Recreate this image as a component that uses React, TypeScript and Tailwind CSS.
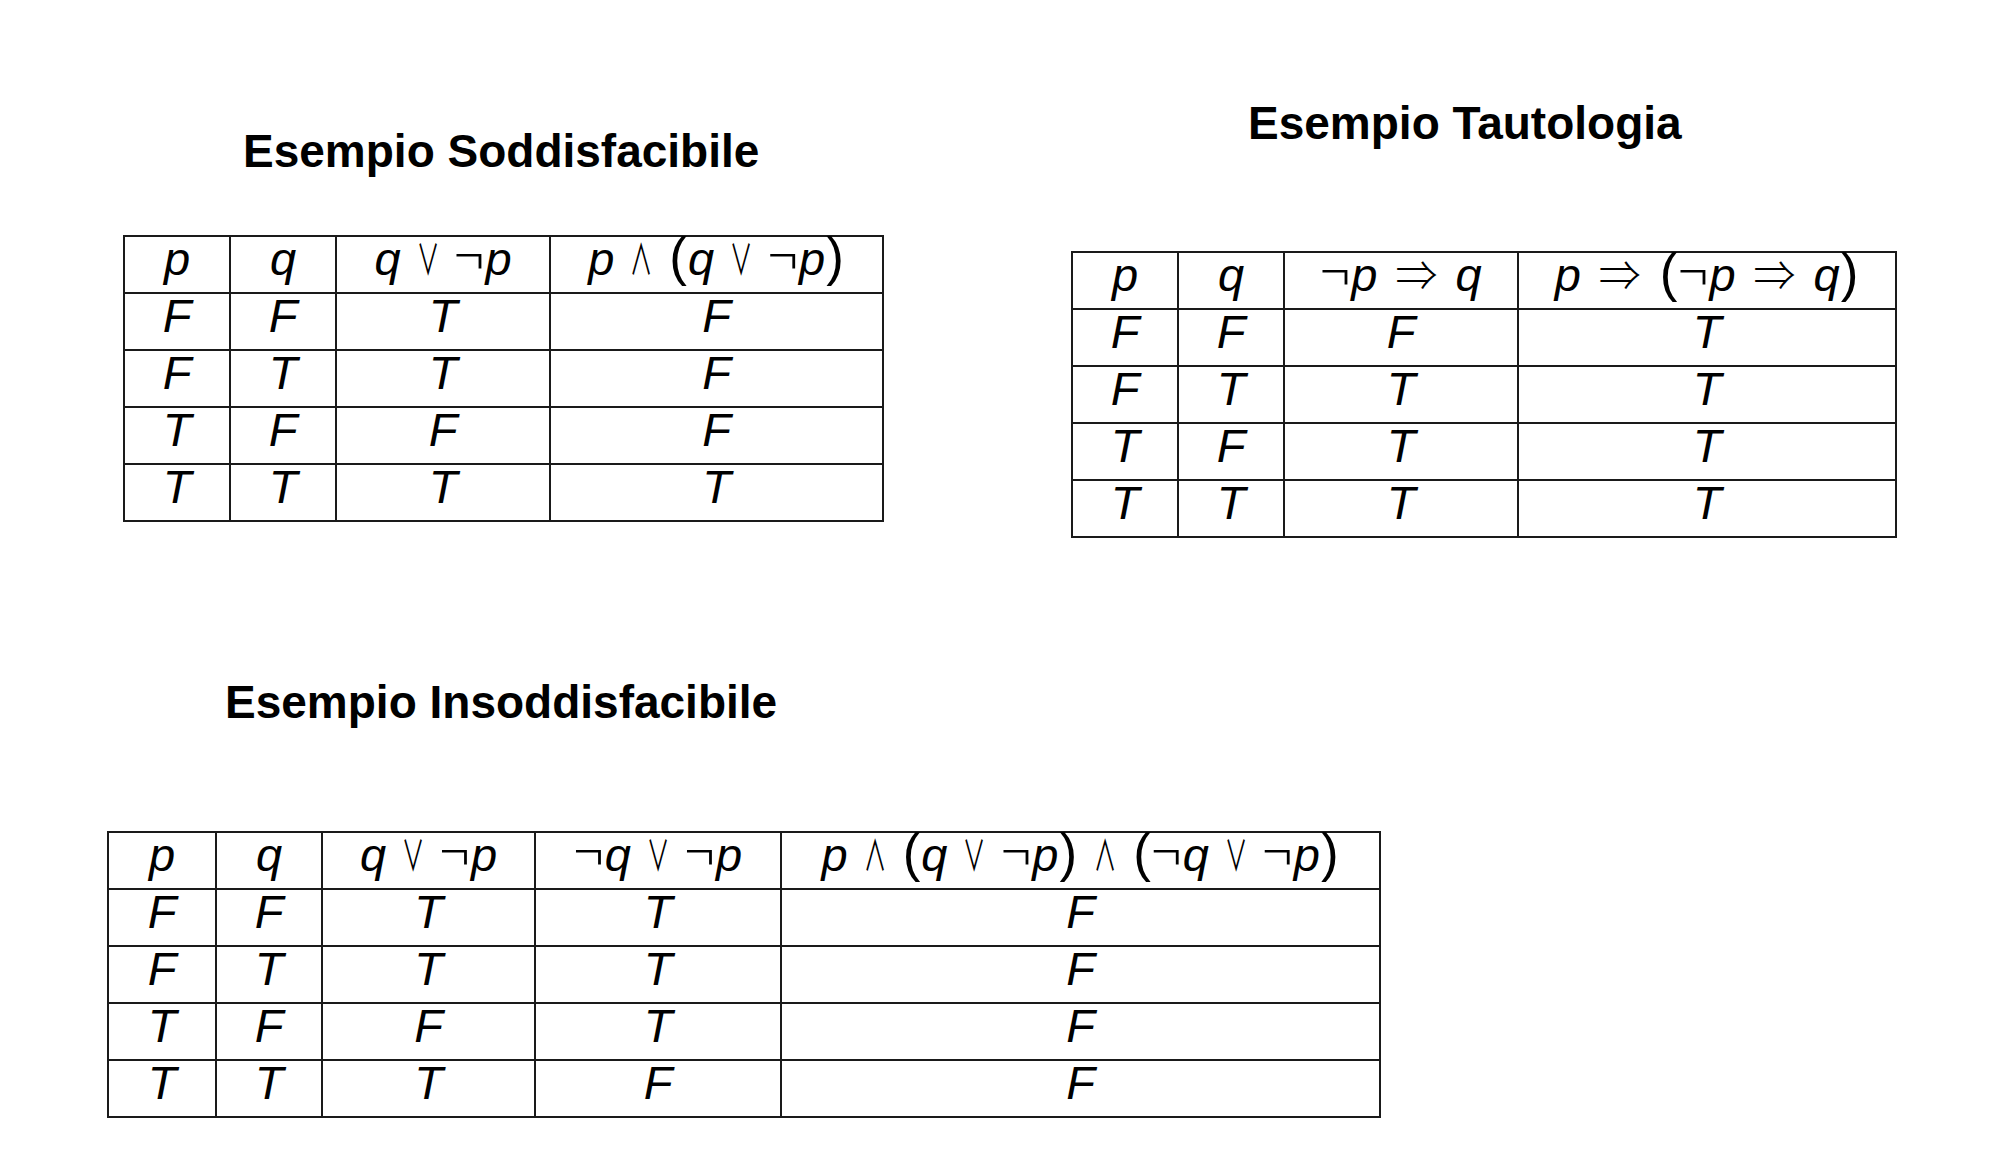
import React from 'react';

// truth tables for the three examples
type Table = {
    title: string;
    titlePad: string;
    cols: string;
    heads: string[];
    rows: string[][];
};

// thin operator glyphs come from the CJK face; ∨ ∧ are squeezed to the narrow math shape
const opClass = "inline-block not-italic font-['Noto_Sans_CJK_JP',sans-serif] font-normal text-[42px] leading-[0] scale-x-[0.54] mx-[6px]";
const relClass = "not-italic font-['Noto_Sans_CJK_JP',sans-serif] font-light text-[42px] leading-[0] mx-[18px]";
const negClass = "not-italic font-['Noto_Sans_CJK_JP',sans-serif] font-light text-[54px] leading-[0] mr-[2px]";
const parenClass = "not-italic font-['Liberation_Sans',Arial,sans-serif] text-[53px] leading-[0] mx-[1px]";

const Formula = ({ src }: { src: string }) => (
    <span className="whitespace-nowrap">
        {src.split('').map((ch, i) => {
            if (ch === ' ') return null;
            if (ch === '∨' || ch === '∧') return <span key={i} className={opClass}>{ch}</span>;
            if (ch === '⇒') return <span key={i} className={relClass}>{ch}</span>;
            if (ch === '¬') return <span key={i} className={negClass}>{ch}</span>;
            if (ch === '(' || ch === ')') return <span key={i} className={parenClass}>{ch}</span>;
            return <span key={i} className="italic">{ch}</span>;
        })}
    </span>
);

const TruthTable = ({ t }: { t: Table }) => (
    <div>
        <h2 className={`text-[46px] leading-[46px] font-bold text-black whitespace-nowrap ${t.titlePad}`}>{t.title}</h2>
        <div className={`grid ${t.cols} border-l-2 border-t-2 border-[#1a1a1a] w-max`}>
            {[t.heads, ...t.rows].flat().map((cell, i) => (
                <div key={i} className="h-[57px] border-r-2 border-b-2 border-[#1a1a1a] text-center text-[47px] leading-[44px] text-black">
                    <Formula src={cell} />
                </div>
            ))}
        </div>
    </div>
);

const SODD: Table = {
    title: 'Esempio Soddisfacibile',
    titlePad: 'pl-[120px] mb-[61px]',
    cols: 'grid-cols-[106px_106px_214px_333px]',
    heads: ['p', 'q', 'q ∨ ¬p', 'p ∧ (q ∨ ¬p)'],
    rows: [
        ['F', 'F', 'T', 'F'],
        ['F', 'T', 'T', 'F'],
        ['T', 'F', 'F', 'F'],
        ['T', 'T', 'T', 'T'],
    ],
};

const TAUT: Table = {
    title: 'Esempio Tautologia',
    titlePad: 'pl-[177px] mb-[105px]',
    cols: 'grid-cols-[106px_106px_234px_378px]',
    heads: ['p', 'q', '¬p ⇒ q', 'p ⇒ (¬p ⇒ q)'],
    rows: [
        ['F', 'F', 'F', 'T'],
        ['F', 'T', 'T', 'T'],
        ['T', 'F', 'T', 'T'],
        ['T', 'T', 'T', 'T'],
    ],
};

const INSOD: Table = {
    title: 'Esempio Insoddisfacibile',
    titlePad: 'pl-[118px] mb-[106px]',
    cols: 'grid-cols-[108px_106px_213px_246px_599px]',
    heads: ['p', 'q', 'q ∨ ¬p', '¬q ∨ ¬p', 'p ∧ (q ∨ ¬p) ∧ (¬q ∨ ¬p)'],
    rows: [
        ['F', 'F', 'T', 'T', 'F'],
        ['F', 'T', 'T', 'T', 'F'],
        ['T', 'F', 'F', 'T', 'F'],
        ['T', 'T', 'T', 'F', 'F'],
    ],
};

export default function App() {
    return (
        <div className="w-[2006px] min-h-[1158px] bg-white font-['Liberation_Sans',Arial,sans-serif] pt-[100px]">
            <div className="flex items-start">
                <div className="ml-[123px] mt-[28px]">
                    <TruthTable t={SODD} />
                </div>
                <div className="ml-[187px]">
                    <TruthTable t={TAUT} />
                </div>
            </div>
            <div className="ml-[107px] mt-[141px]">
                <TruthTable t={INSOD} />
            </div>
        </div>
    );
}
